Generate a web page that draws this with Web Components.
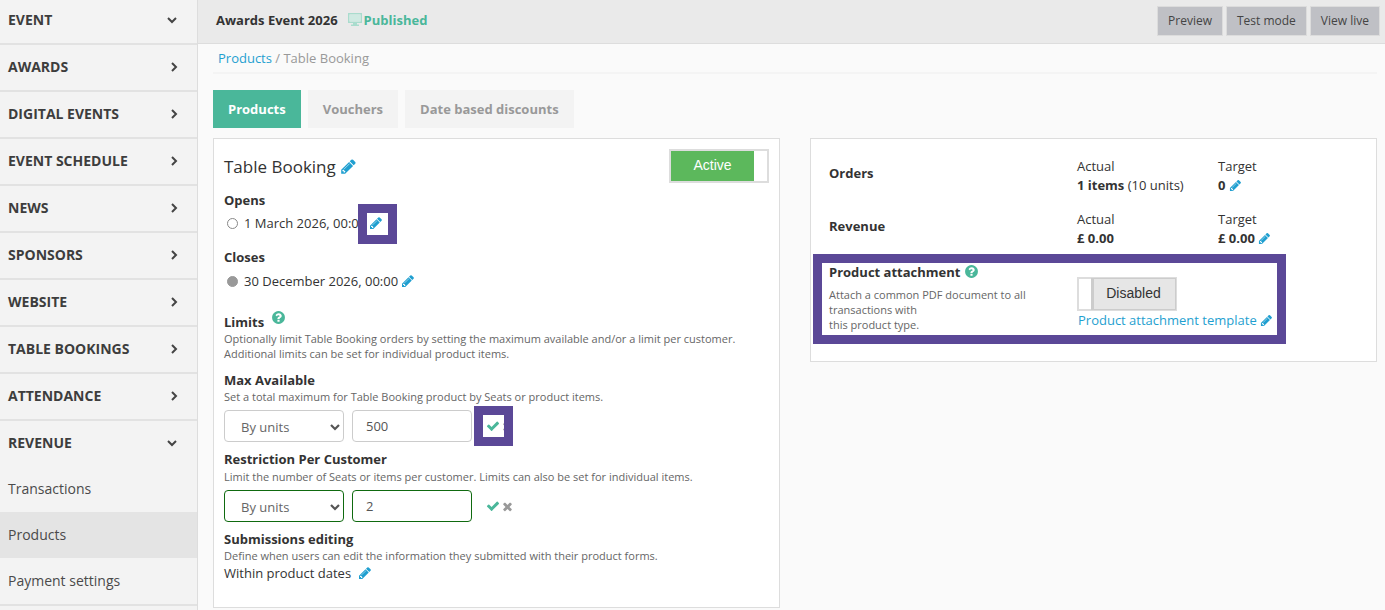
<!DOCTYPE html>
<html lang="en">
<head>
<meta charset="UTF-8" />
<title>Table Booking</title>
<style>
    html, body { margin: 0; height: 100%; overflow: hidden; }
    body { font: 13px/18px "Open Sans", "Liberation Sans", sans-serif; color: #333; background: #fafafa; }
</style>
</head>
<body>
<app-page>
    <side-nav slot="nav">
        <nav-group label="Event" open></nav-group>
        <nav-group label="Awards"></nav-group>
        <nav-group label="Digital events"></nav-group>
        <nav-group label="Event schedule"></nav-group>
        <nav-group label="News"></nav-group>
        <nav-group label="Sponsors"></nav-group>
        <nav-group label="Website"></nav-group>
        <nav-group label="Table bookings"></nav-group>
        <nav-group label="Attendance"></nav-group>
        <nav-group label="Revenue" open>
            <nav-link>Transactions</nav-link>
            <nav-link active>Products</nav-link>
            <nav-link>Payment settings</nav-link>
        </nav-group>
    </side-nav>

    <top-bar slot="top" heading="Awards Event 2026" status="Published">
        <bar-button>Preview</bar-button>
        <bar-button>Test mode</bar-button>
        <bar-button>View live</bar-button>
    </top-bar>

    <crumb-bar><a>Products</a> / Table Booking</crumb-bar>

    <tab-strip>
        <tab-item active>Products</tab-item>
        <tab-item>Vouchers</tab-item>
        <tab-item>Date based discounts</tab-item>
    </tab-strip>

    <panel-row>
        <product-form></product-form>
        <product-stats></product-stats>
    </panel-row>
</app-page>

<script type="module">
    const PENCIL = 'M491 1536l91-91-235-235-91 91v107h128v128h107zm523-928q0-22-22-22-10 0-17 7l-542 542q-7 7-7 17 0 22 22 22 10 0 17-7l542-542q7-7 7-17zm-54-192l416 416-832 832h-416v-416zm683 96q0 53-37 90l-166 166-416-416 166-165q36-38 90-38 53 0 91 38l235 234q37 39 37 91z';
    const CHECK = 'M1671 566q0 40-28 68l-724 724-136 136q-28 28-68 28t-68-28l-136-136-362-362q-28-28-28-68t28-68l136-136q28-28 68-28t68 28l294 295 656-657q28-28 68-28t68 28l136 136q28 28 28 68z';
    const TIMES = 'M1490 1322q0 40-28 68l-136 136q-28 28-68 28t-68-28l-294-294-294 294q-28 28-68 28t-68-28l-136-136q-28-28-28-68t28-68l294-294-294-294q-28-28-28-68t28-68l136-136q28-28 68-28t68 28l294 294 294-294q28-28 68-28t68 28l136 136q28 28 28 68t-28 68l-294 294 294 294q28 28 28 68z';
    const HELP = 'M1024 1376v-192q0-14-9-23t-23-9h-192q-14 0-23 9t-9 23v192q0 14 9 23t23 9h192q14 0 23-9t9-23zm256-672q0-88-55.5-163t-138.5-116-170-41q-243 0-371 213-15 24 8 42l132 100q7 6 19 6 16 0 25-12 53-68 86-92 34-24 86-24 48 0 85.5 26t37.5 59q0 38-20 61t-68 45q-63 28-115.5 86.5t-52.5 125.5v36q0 14 9 23t23 9h192q14 0 23-9t9-23q0-19 21.5-49.5t54.5-49.5q32-18 49-28.5t46-35 44.5-48 28-60.5 12.5-81zm384 192q0 209-103 385.5t-279.5 279.5-385.5 103-385.5-103-279.5-279.5-103-385.5 103-385.5 279.5-279.5 385.5-103 385.5 103 279.5 279.5 103 385.5z';

    const open = (el, html) => {
        el.attachShadow({ mode: 'open' }).innerHTML = html;
    };

    class AppPage extends HTMLElement {
        constructor() {
            super();
            open(this, `<style>
                :host { display: grid; grid-template-columns: 198px 1fr; grid-template-rows: 44px 1fr; height: 100vh; }
                .nav { grid-row: 1 / 3; min-height: 0; }
                main { padding: 0 8px 0 15px; min-width: 0; }
            </style>
            <div class="nav"><slot name="nav"></slot></div>
            <div><slot name="top"></slot></div>
            <main><slot></slot></main>`);
        }
    }

    class SideNav extends HTMLElement {
        constructor() {
            super();
            open(this, `<style>
                :host { display: block; height: 100%; background: #f3f3f3; border-right: 1px solid #ddd; box-sizing: border-box; overflow: hidden; }
            </style><slot></slot>`);
        }
    }

    class NavGroup extends HTMLElement {
        constructor() {
            super();
            const isOpen = this.hasAttribute('open');
            // first row of the list sits flush with the top of the window
            const arrow = isOpen ? 'M2 4l4 4 4-4' : 'M4 2l4 4-4 4';
            open(this, `<style>
                :host { display: block; border-bottom: 2px solid #e2e2e2; }
                :host(:first-child) .head { height: 40px; padding-bottom: 3px; }
                .head { display: flex; align-items: center; justify-content: space-between; height: 43px; padding: 0 17px 2px 8px; font-size: 14px; font-weight: 700; color: #3d3d3d; text-transform: uppercase; }
                svg { width: 12px; height: 12px; fill: none; stroke: #444; stroke-width: 2; }
                :host([open]) svg { margin-right: 2px; }
            </style>
            <div class="head"><span>${this.getAttribute('label')}</span><svg viewBox="0 0 12 12"><path d="${arrow}"/></svg></div>
            <slot></slot>`);
        }
    }

    class NavLink extends HTMLElement {
        constructor() {
            super();
            open(this, `<style>
                :host { display: flex; align-items: center; height: 46px; padding-left: 8px; font-size: 14px; color: #4a4a4a; }
                :host([active]) { background: #e4e4e4; }
            </style><slot></slot>`);
        }
    }

    class TopBar extends HTMLElement {
        constructor() {
            super();
            open(this, `<style>
                :host { display: flex; align-items: center; height: 44px; box-sizing: border-box; padding: 0 5px 3px 18px; background: #eaeaea; border-bottom: 1px solid #ddd; }
                b { font-size: 13px; font-weight: 700; color: #333; }
                svg { width: 14px; height: 13px; margin: 0 2px 2px 10px; }
                .status { font-size: 13px; font-weight: 700; color: #4ab79a; }
                .btns { display: flex; gap: 3px; margin-left: auto; margin-top: 2px; }
            </style>
            <b>${this.getAttribute('heading')}</b>
            <svg viewBox="0 0 14 13"><path fill="#a9dccd" d="M0 0h14v10H9v1.500h2V13H3v-1.500h2V10H0zM1.500 1.500v7h11v-7z"/><rect x="1.500" y="1.500" width="11" height="7" fill="#cfeae2"/></svg>
            <span class="status">${this.getAttribute('status')}</span>
            <div class="btns"><slot></slot></div>`);
        }
    }

    class BarButton extends HTMLElement {
        constructor() {
            super();
            open(this, `<style>
                :host { display: flex; align-items: center; height: 30px; padding: 0 10px; margin: 0; background: #bfc0c5; border: 1px solid #dcdcdc; box-sizing: border-box; font-size: 12px; color: #444; }
            </style><slot></slot>`);
        }
    }

    class CrumbBar extends HTMLElement {
        constructor() {
            super();
            open(this, `<style>
                :host { display: block; height: 30px; box-sizing: border-box; padding: 5px 0 0 5px; border-bottom: 2px solid #f4f4f4; font-size: 13px; color: #999; }
                ::slotted(a) { color: #1f9fd0; }
            </style><slot></slot>`);
        }
    }

    class TabStrip extends HTMLElement {
        constructor() {
            super();
            open(this, `<style>
                :host { display: flex; gap: 7px; margin: 16px 0 10px; }
            </style><slot></slot>`);
        }
    }

    class TabItem extends HTMLElement {
        constructor() {
            super();
            open(this, `<style>
                :host { display: flex; align-items: center; height: 38px; padding: 0 15px; background: #f3f3f3; font-size: 13px; font-weight: 700; color: #999; }
                :host([active]) { background: #4ab79a; color: #fff; }
            </style><slot></slot>`);
        }
    }

    class PanelRow extends HTMLElement {
        constructor() {
            super();
            open(this, `<style>
                :host { display: grid; grid-template-columns: 567px 567px; gap: 30px; align-items: start; }
            </style><slot></slot>`);
        }
    }

    class FaIcon extends HTMLElement {
        constructor() {
            super();
            const size = this.getAttribute('size') || 14;
            const paths = { pencil: PENCIL, check: CHECK, times: TIMES, help: HELP };
            open(this, `<style>
                :host { display: inline-block; line-height: 0; vertical-align: -2px; color: #1f9fd0; }
                svg { fill: currentColor; }
            </style>
            <svg width="${size}" height="${size}" viewBox="0 0 1792 1792"><path d="${paths[this.getAttribute('name')]}"/></svg>`);
        }
    }

    class OnOff extends HTMLElement {
        constructor() {
            super();
            open(this, `<style>
                :host { display: flex; width: 100px; height: 34px; box-sizing: border-box; border: 2px solid #ddd; background: #fff; font: 14px/28px "Liberation Sans", Arial, sans-serif; }
                span { display: block; flex: 1; text-align: center; }
                i { display: block; width: 13px; }
                :host([on]) span { background: #5cb85c; color: #fff; }
                :host(:not([on])) span { background: #e6e6e6; color: #333; border-left: 2px solid #ccc; outline: 1px solid #ccc; padding-right: 2px; }
            </style>
            ${this.hasAttribute('on') ? '<span><slot></slot></span><i></i>' : '<i></i><span><slot></slot></span>'}`);
        }
    }

    class PickBox extends HTMLElement {
        constructor() {
            super();
            open(this, `<style>
                :host { display: flex; align-items: center; justify-content: space-between; width: 120px; height: 32px; box-sizing: border-box; border: 1px solid #ccc; border-radius: 4px; padding: 2px 3px 0 16px; color: #666; background: #fff; }
                :host([ok]) { border-color: #0f6a0f; }
                svg { fill: none; stroke: #555; stroke-width: 2.2; }
            </style>
            <slot></slot><svg width="10" height="7" viewBox="0 0 10 7"><path d="M1 1l4 4 4-4"/></svg>`);
        }
    }

    class TextBox extends HTMLElement {
        constructor() {
            super();
            open(this, `<style>
                :host { display: flex; align-items: center; width: 120px; height: 32px; box-sizing: border-box; border: 1px solid #ccc; border-radius: 4px; padding: 0 13px; color: #555; background: #fff; }
                :host([ok]) { border-color: #0f6a0f; }
            </style><slot></slot>`);
        }
    }

    class MarkRing extends HTMLElement {
        constructor() {
            super();
            const a = (n) => this.getAttribute(n) + 'px';
            open(this, `<style>
                :host { position: absolute; left: ${a('x')}; top: ${a('y')}; width: ${a('w')}; height: ${a('h')}; box-sizing: border-box; border: 9px solid #5b4897; pointer-events: none; }
            </style>`);
        }
    }

    class ProductForm extends HTMLElement {
        constructor() {
            super();
            open(this, `<style>
                :host { display: block; position: relative; height: 470px; box-sizing: border-box; background: #fff; border: 1px solid #ddd; padding: 0 10px; font-size: 13px; }
                .title { display: flex; align-items: center; justify-content: space-between; height: 44px; padding-top: 5px; padding-right: 0; }
                h2 { margin: 2px 0 0; font-size: 17px; font-weight: 400; color: #333; line-height: 24px; }
                h4 { margin: 0; height: 18px; font-size: 13px; font-weight: 700; color: #333; line-height: 18px; }
                p { margin: 0; font-size: 11px; line-height: 15px; color: #666; }
                .date { display: flex; align-items: center; height: 20px; margin-top: 4px; }
                .dot { width: 11px; height: 11px; box-sizing: border-box; border: 1px solid #888; border-radius: 50%; margin: 0 6px 0 3px; }
                .dot.fill { background: #999; border-color: #999; }
                .date fa-icon { margin-left: 3px; }
                .row { display: flex; align-items: center; gap: 8px; margin-top: 6px; }
                .row .acts { display: flex; align-items: center; gap: 1px; margin-left: 6px; }
                .acts .ok { color: #4ab79a; }
                .acts .no { color: #999; }
                .limits { display: flex; align-items: flex-start; }
                .limits fa-icon { color: #4ab79a; margin: -3px 0 0 7px; }
            </style>
            <div class="title">
                <h2>Table Booking<fa-icon name="pencil" size="17" style="margin-left:4px"></fa-icon></h2>
                <on-off on>Active</on-off>
            </div>
            <h4 style="margin-top:3px">Opens</h4>
            <div class="date"><span class="dot"></span>1 March 2026, 00:00<fa-icon name="pencil" size="14"></fa-icon></div>
            <h4 style="margin-top:15px">Closes</h4>
            <div class="date" style="margin-top:5px"><span class="dot fill"></span>30 December 2026, 00:00 <fa-icon name="pencil" size="14"></fa-icon></div>
            <h4 class="limits" style="margin-top:22px">Limits<fa-icon name="help" size="15"></fa-icon></h4>
            <p>Optionally limit Table Booking orders by setting the maximum available and/or a limit per customer.<br>Additional limits can be set for individual product items.</p>
            <h4 style="margin-top:10px">Max Available</h4>
            <p>Set a total maximum for Table Booking product by Seats or product items.</p>
            <div class="row">
                <pick-box>By units</pick-box><text-box>500</text-box>
                <span class="acts"><fa-icon class="ok" name="check" size="14"></fa-icon><fa-icon class="no" name="times" size="13"></fa-icon></span>
            </div>
            <h4 style="margin-top:8px">Restriction Per Customer</h4>
            <p style="margin-top:1px">Limit the number of Seats or items per customer. Limits can also be set for individual items.</p>
            <div class="row">
                <pick-box ok>By units</pick-box><text-box ok>2</text-box>
                <span class="acts"><fa-icon class="ok" name="check" size="14"></fa-icon><fa-icon class="no" name="times" size="13"></fa-icon></span>
            </div>
            <h4 style="margin-top:8px">Submissions editing</h4>
            <p>Define when users can edit the information they submitted with their product forms.</p>
            <div style="margin-top:1px">Within product dates &nbsp;<fa-icon name="pencil" size="14"></fa-icon></div>
            <mark-ring x="144" y="65" w="39" h="40"></mark-ring>
            <mark-ring x="260" y="267" w="39" h="40"></mark-ring>`);
        }
    }

    class ProductStats extends HTMLElement {
        constructor() {
            super();
            open(this, `<style>
                :host { display: grid; position: relative; grid-template-columns: 248px 141px 1fr; height: 224px; box-sizing: border-box; background: #fff; border: 1px solid #ddd; padding: 18px 0 0 18px; font-size: 13px; align-content: start; grid-auto-rows: 53px; }
                .lbl { font-weight: 700; padding-top: 7px; }
                .cell { line-height: 19px; }
                b { font-weight: 700; }
                .attach { grid-column: 1 / 4; display: grid; grid-template-columns: 248px 1fr; height: 80px; box-sizing: border-box; }
                h4 { margin: 0; font-size: 13px; line-height: 18px; font-weight: 700; }
                p { margin: 6px 0 0; width: 210px; font-size: 11px; line-height: 15px; color: #666; }
                a { color: #1f9fd0; display: block; padding-left: 1px; }
                .link { padding-top: 14px; }
            </style>
            <div class="lbl">Orders</div>
            <div class="cell">Actual<br><b>1 items</b> (10 units)</div>
            <div class="cell">Target<br><b>0</b> <fa-icon name="pencil" size="13"></fa-icon></div>
            <div class="lbl">Revenue</div>
            <div class="cell">Actual<br><b>£ 0.00</b></div>
            <div class="cell">Target<br><b>£ 0.00</b> <fa-icon name="pencil" size="13"></fa-icon></div>
            <div class="attach">
                <div>
                    <h4>Product attachment <fa-icon name="help" size="15" style="color:#4ab79a"></fa-icon></h4>
                    <p>Attach a common PDF document to all transactions with<br>this product type.</p>
                </div>
                <div class="link">
                    <on-off>Disabled</on-off>
                    <a>Product attachment template <fa-icon name="pencil" size="13"></fa-icon></a>
                </div>
            </div>
            <mark-ring x="2" y="115" w="473" h="90"></mark-ring>`);
        }
    }

    customElements.define('app-page', AppPage);
    customElements.define('side-nav', SideNav);
    customElements.define('nav-group', NavGroup);
    customElements.define('nav-link', NavLink);
    customElements.define('top-bar', TopBar);
    customElements.define('bar-button', BarButton);
    customElements.define('crumb-bar', CrumbBar);
    customElements.define('tab-strip', TabStrip);
    customElements.define('tab-item', TabItem);
    customElements.define('panel-row', PanelRow);
    customElements.define('fa-icon', FaIcon);
    customElements.define('on-off', OnOff);
    customElements.define('pick-box', PickBox);
    customElements.define('text-box', TextBox);
    customElements.define('mark-ring', MarkRing);
    customElements.define('product-form', ProductForm);
    customElements.define('product-stats', ProductStats);
</script>
</body>
</html>
